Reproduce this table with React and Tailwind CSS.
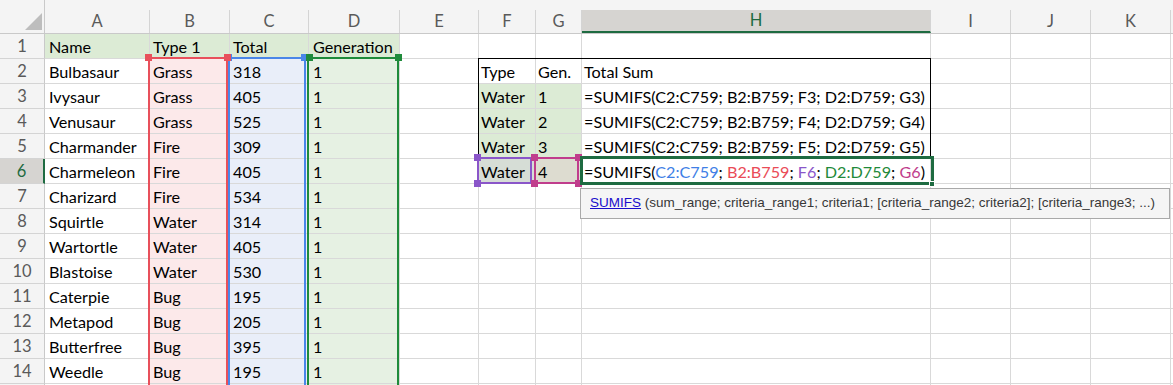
import React from "react";

const LETTERS = ["A", "B", "C", "D", "E", "F", "G", "H", "I", "J", "K"];

const DATA = [
  ["Bulbasaur", "Grass", "318", "1"],
  ["Ivysaur", "Grass", "405", "1"],
  ["Venusaur", "Grass", "525", "1"],
  ["Charmander", "Fire", "309", "1"],
  ["Charmeleon", "Fire", "405", "1"],
  ["Charizard", "Fire", "534", "1"],
  ["Squirtle", "Water", "314", "1"],
  ["Wartortle", "Water", "405", "1"],
  ["Blastoise", "Water", "530", "1"],
  ["Caterpie", "Bug", "195", "1"],
  ["Metapod", "Bug", "205", "1"],
  ["Butterfree", "Bug", "395", "1"],
  ["Weedle", "Bug", "195", "1"],
];

function cellContent(r, c) {
  if (r === 1) {
    return [["Name", "Type 1", "Total", "Generation"][c] || "", c <= 3 ? "bg-[#dcebd5]" : ""];
  }
  let text = "";
  let bg = "";
  if (c <= 3) text = DATA[r - 2][c];
  if (c === 1) bg = "bg-[#fce9ea]";
  if (c === 2) bg = "bg-[#e9eef9]";
  if (c === 3) bg = "bg-[#e6f1e3]";
  if (r === 2) {
    if (c === 5) text = "Type";
    if (c === 6) text = "Gen.";
    if (c === 7) text = "Total Sum";
  }
  if (r >= 3 && r <= 6) {
    if (c === 5) text = "Water";
    if (c === 6) text = String(r - 2);
    if (c === 7 && r <= 5)
      text = `=SUMIFS(C2:C759; B2:B759; F${r}; D2:D759; G${r})`;
    if ((c === 5 || c === 6) && r <= 5) bg = "bg-[#dcebd5]";
    if (c === 5 && r === 6) bg = "bg-[#d6ddd6]";
    if (c === 6 && r === 6) bg = "bg-[#dddcd0]";
  }
  return [text, bg];
}

function Formula6() {
  return (
    <span>
      =SUMIFS(<span className="text-[#3f7fe6]">C2:C759</span>;{" "}
      <span className="text-[#ea4b57]">B2:B759</span>;{" "}
      <span className="text-[#8a56c9]">F6</span>;{" "}
      <span className="text-[#1f8a3a]">D2:D759</span>;{" "}
      <span className="text-[#c03d8c]">G6</span>)
    </span>
  );
}

function Handle({ className }) {
  return <div className={`absolute w-[7px] h-[7px] ${className}`} />;
}

export default function App() {
  const rows = [];
  for (let r = 1; r <= 14; r++) rows.push(r);

  return (
    <div
      className="relative w-[1173px] h-[385px] overflow-hidden bg-white text-black"
      style={{ fontFamily: "Lato, 'Open Sans', sans-serif" }}
    >
      <div className="grid grid-cols-[45px_105px_80px_79px_91px_79px_57px_46px_349px_80px_80px_80px_1fr] grid-rows-[34px_repeat(15,25px)]">
        {/* corner */}
        <div className="relative bg-[#f4f4f4] border-b border-r border-[#c9c9c9]">
          <svg className="absolute left-[25px] top-[13px]" width="18" height="18" viewBox="0 0 18 18">
            <polygon points="17,0 17,17 0,17" fill="#bdbdbd" />
          </svg>
        </div>
        {LETTERS.map((l) => (
          <div key={l} className="bg-[#f4f4f4] border-b border-[#c9c9c9] pt-[10px]">
            <div
              className={`h-full flex items-center justify-center text-[16.5px] border-r border-[#d4d4d4] ${
                l === "H"
                  ? "bg-[#d6d4d1] text-[#1e6b41] border-b-2 border-b-[#1e6b41]"
                  : "text-[#5a5a5a]"
              }`}
            >
              {l}
            </div>
          </div>
        ))}
        <div className="bg-[#f4f4f4] border-b border-[#c9c9c9]" />

        {rows.map((r) => (
          <React.Fragment key={r}>
            <div
              className={`flex items-center justify-center text-[16.5px] border-b border-[#d4d4d4] ${
                r === 6
                  ? "bg-[#d6d4d1] text-[#1e6b41] border-r-2 border-r-[#1e6b41]"
                  : "bg-[#f4f4f4] text-[#5a5a5a] border-r border-r-[#c9c9c9]"
              }`}
            >
              {r}
            </div>
            {LETTERS.map((l, c) => {
              const [text, bg] = cellContent(r, c);
              const pad = c === 0 || c === 3 ? "pl-[4px]" : c >= 5 && c <= 7 ? "pl-[2px]" : "pl-[3px]";
              return (
                <div
                  key={l}
                  className={`border-r border-b border-[#d9d9d9] ${bg} ${pad} text-[16.2px] leading-[24px] pt-[1px] whitespace-nowrap overflow-visible`}
                >
                  {r === 6 && c === 7 ? <Formula6 /> : text}
                </div>
              );
            })}
            <div className="border-b border-[#d9d9d9]" />
          </React.Fragment>
        ))}
        {/* partial row 15 */}
        <div className="bg-[#f4f4f4] border-r border-[#c9c9c9]" />
        {LETTERS.map((l, c) => (
          <div
            key={l}
            className={`border-r border-[#d9d9d9] ${c === 1 ? "bg-[#fce9ea]" : c === 2 ? "bg-[#e9eef9]" : c === 3 ? "bg-[#e6f1e3]" : ""}`}
          />
        ))}
        <div />
      </div>

      {/* black table border F2:H5 */}
      <div className="absolute left-[478px] top-[58px] w-[453px] h-[100px] border border-black" />

      {/* blue range C2:C14 */}
      <div className="absolute left-[228px] top-[57px] w-[78px] h-[340px] border-2 border-[#4a86e8]" />
      <Handle className="left-[225px] top-[54px] bg-[#4a86e8]" />
      <Handle className="left-[301px] top-[54px] bg-[#4a86e8]" />
      {/* red range B2:B14 */}
      <div className="absolute left-[148px] top-[57px] w-[80px] h-[340px] border-2 border-[#e8505b]" />
      <Handle className="left-[145px] top-[54px] bg-[#e8505b]" />
      <Handle className="left-[224px] top-[54px] bg-[#e8505b]" />
      {/* green range D2:D14 */}
      <div className="absolute left-[307px] top-[57px] w-[92px] h-[340px] border-2 border-[#1f8b3b]" />
      <Handle className="left-[306px] top-[54px] bg-[#1f8b3b]" />
      <Handle className="left-[395px] top-[54px] bg-[#1f8b3b]" />

      {/* purple F6 */}
      <div className="absolute left-[477px] top-[157px] w-[55px] h-[27px] border-2 border-[#8a56c9]" />
      <Handle className="left-[474px] top-[154px] bg-[#8a56c9]" />
      <Handle className="left-[474px] top-[180px] bg-[#8a56c9]" />
      {/* magenta G6 */}
      <div className="absolute left-[534px] top-[157px] w-[45px] h-[27px] border-2 border-[#c03d8c]" />
      <Handle className="left-[531px] top-[154px] bg-[#c03d8c]" />
      <Handle className="left-[531px] top-[180px] bg-[#c03d8c]" />
      <Handle className="left-[575px] top-[154px] bg-[#c03d8c]" />
      <Handle className="left-[575px] top-[180px] bg-[#c03d8c]" />

      {/* active cell H6 */}
      <div className="absolute left-[580px] top-[156px] w-[354px] h-[29px] border-[3px] border-[#1e6b41]" />
      <div className="absolute left-[929px] top-[181px] w-[6px] h-[6px] bg-[#1e6b41] border border-white" />

      {/* tooltip */}
      <div
        className="absolute left-[580px] top-[188px] w-[590px] h-[31px] bg-[#f5f5f5] border border-[#a9a9a9] flex items-center pl-[9px] text-[13.5px] text-[#383838] whitespace-nowrap"
        style={{ fontFamily: "'Liberation Sans', Arial, sans-serif" }}
      >
        <span className="text-[#1a0dcc] underline">SUMIFS</span>
        <span>&nbsp;(sum_range; criteria_range1; criteria1; [criteria_range2; criteria2]; [criteria_range3; ...)</span>
      </div>
    </div>
  );
}
